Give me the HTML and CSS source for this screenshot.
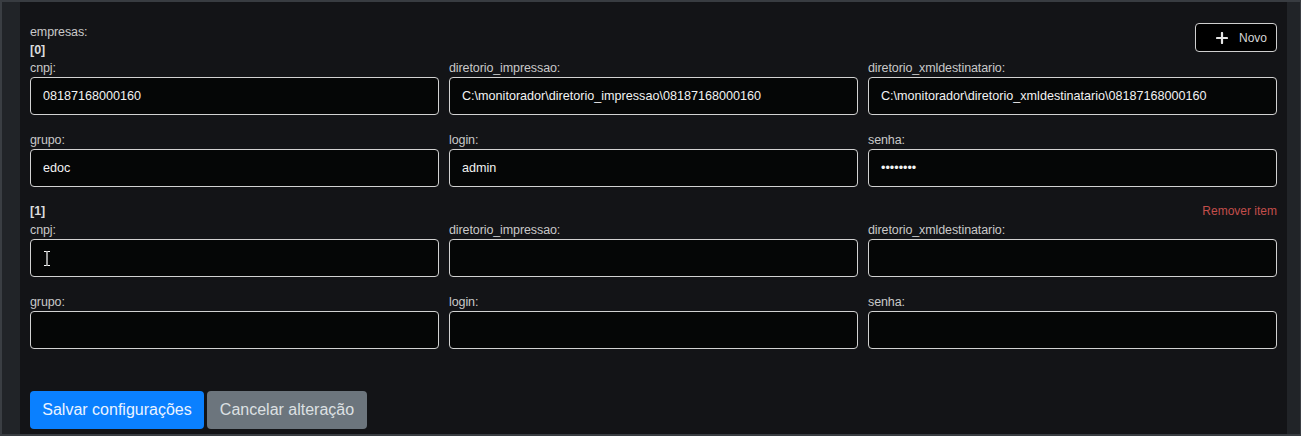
FILE: index.html
```html
<!DOCTYPE html>
<html lang="pt-BR">
<head>
<meta charset="utf-8">
<title>Configurações</title>
<link rel="stylesheet" href="styles.css">
</head>
<body>
<div class="frame">
  <main class="panel">
    <div class="list-head">
      <div class="list-title">
        <span class="label">empresas:</span>
        <span class="item-index">[0]</span>
      </div>
      <button class="btn-new" type="button">
        <svg width="12" height="12" viewBox="0 0 12 12" aria-hidden="true"><path d="M6 1v10M1 6h10" stroke="#e6e6e6" stroke-width="2.2" stroke-linecap="round"/></svg>
        <span>Novo</span>
      </button>
    </div>

    <section class="item">
      <div class="grid">
        <label class="field"><span class="label">cnpj:</span><input class="input" value="08187168000160"></label>
        <label class="field"><span class="label">diretorio_impressao:</span><input class="input" value="C:\monitorador\diretorio_impressao\08187168000160"></label>
        <label class="field"><span class="label">diretorio_xmldestinatario:</span><input class="input" value="C:\monitorador\diretorio_xmldestinatario\08187168000160"></label>
        <label class="field"><span class="label">grupo:</span><input class="input" value="edoc"></label>
        <label class="field"><span class="label">login:</span><input class="input" value="admin"></label>
        <label class="field"><span class="label">senha:</span><input class="input" type="password" value="12345678"></label>
      </div>
    </section>

    <section class="item">
      <div class="item-head">
        <span class="item-index">[1]</span>
        <a class="remove" href="#">Remover item</a>
      </div>
      <div class="grid">
        <label class="field"><span class="label">cnpj:</span>
          <span class="input-wrap">
            <input class="input" value="">
            <svg class="ibeam" width="8" height="17" viewBox="0 0 8 17" aria-hidden="true"><path d="M1 1.5h2.5M4.5 1.5H7M4 1.5v14M1 15.5h2.5M4.5 15.5H7" stroke="#fff" stroke-width="1.2" fill="none"/></svg>
          </span>
        </label>
        <label class="field"><span class="label">diretorio_impressao:</span><input class="input" value=""></label>
        <label class="field"><span class="label">diretorio_xmldestinatario:</span><input class="input" value=""></label>
        <label class="field"><span class="label">grupo:</span><input class="input" value=""></label>
        <label class="field"><span class="label">login:</span><input class="input" value=""></label>
        <label class="field"><span class="label">senha:</span><input class="input" type="password" value=""></label>
      </div>
    </section>

    <div class="actions">
      <button class="btn btn-primary" type="button">Salvar configurações</button>
      <button class="btn btn-secondary" type="button">Cancelar alteração</button>
    </div>
  </main>
</div>
</body>
</html>
```

FILE: styles.css
```css
* { box-sizing: border-box; }

html, body {
  margin: 0;
  height: 100%;
  background: #212428;
}

body {
  font-family: "Liberation Sans", Arial, sans-serif;
  color: #d4d4d4;
}

.frame {
  height: 436px;
  border-top: 2px solid #383c41;
  border-left: 2px solid #3a3e43;
  border-right: 1px solid #3a3e43;
  border-bottom: 2px solid #383c41;
  padding: 0 13px 0 18px;
  background: #212428;
}

.panel {
  height: 100%;
  background: #131417;
  padding: 21px 10px 0 10px;
}

.list-head {
  display: flex;
  justify-content: space-between;
  align-items: flex-start;
}

.list-title {
  display: flex;
  flex-direction: column;
  gap: 2px;
  padding-top: 2px;
}

.label {
  display: block;
  font-size: 12.5px;
  line-height: 14px;
  color: #c9c9c9;
  margin-bottom: 2px;
  letter-spacing: -0.1px;
}

.item-index {
  font-size: 12.5px;
  font-weight: bold;
  line-height: 14px;
  color: #dcdcdc;
}

.btn-new {
  display: flex;
  align-items: center;
  gap: 11px;
  height: 29px;
  width: 82px;
  padding: 0 0 0 20px;
  background: #000;
  border: 1px solid #cfcfcf;
  border-radius: 4px;
  color: #d6d6d6;
  font-family: inherit;
  font-size: 12px;
  cursor: pointer;
}

.item {
  margin-top: 4px;
}

.item + .item {
  margin-top: 16px;
}

.item-head {
  display: flex;
  justify-content: space-between;
  align-items: center;
  height: 16px;
  margin-bottom: 4px;
}

.remove {
  font-size: 12px;
  color: #c24e4b;
  text-decoration: none;
}

.grid {
  display: grid;
  grid-template-columns: repeat(3, 1fr);
  column-gap: 10px;
  row-gap: 18px;
}

.field {
  display: block;
}

.input-wrap {
  display: block;
  position: relative;
}

.input {
  display: block;
  width: 100%;
  height: 38px;
  padding: 0 12px;
  background: #050606;
  border: 1px solid #d2d2d2;
  border-radius: 4px;
  color: #f2f2f2;
  font-family: inherit;
  font-size: 12.6px;
  outline: none;
}

.ibeam {
  position: absolute;
  left: 13px;
  top: 11px;
}

.actions {
  display: flex;
  gap: 3px;
  margin-top: 42px;
}

.btn {
  height: 38px;
  padding: 0 12px;
  border: none;
  border-radius: 4px;
  font-family: inherit;
  font-size: 16px;
  cursor: pointer;
}

.btn-primary {
  background: #0a80ff;
  color: #eaf3ff;
  width: 174px;
}

.btn-secondary {
  background: #6c757d;
  color: #dde0e3;
  width: 160px;
}
```
